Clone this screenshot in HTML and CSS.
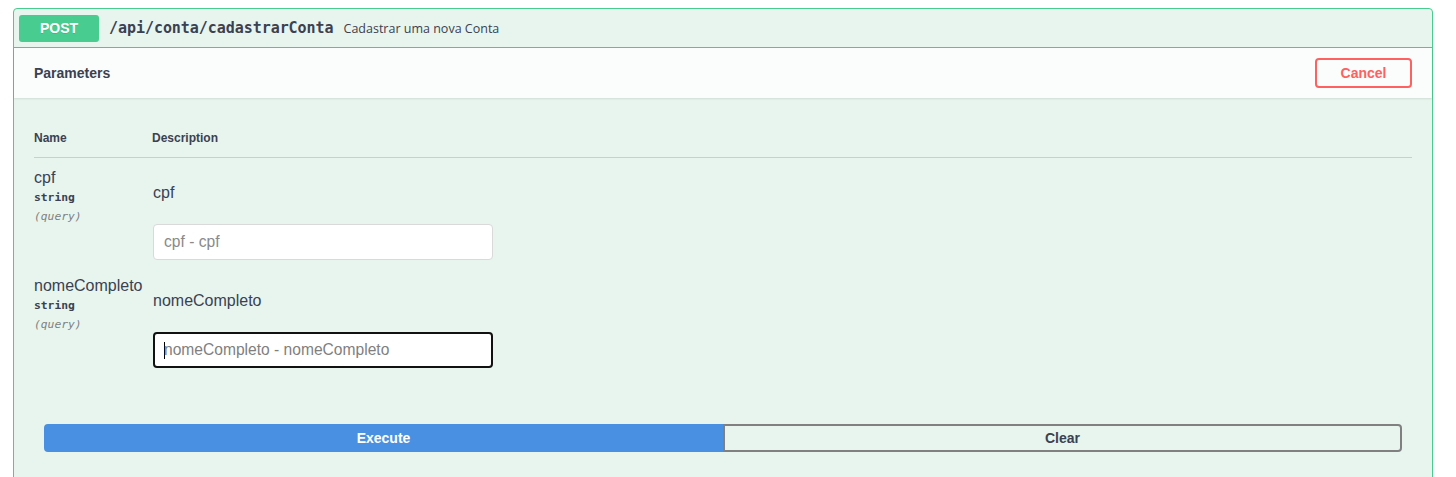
FILE: index.html
```html
<!DOCTYPE html>
<html lang="pt">
<head>
<meta charset="utf-8">
<title>Swagger</title>
<link rel="stylesheet" href="styles.css">
</head>
<body>
<div class="opblock">
  <div class="summary">
    <span class="method">POST</span>
    <span class="path">/api/conta/cadastrarConta</span>
    <span class="summary-desc">Cadastrar uma nova Conta</span>
  </div>
  <div class="section-header">
    <h4 class="section-title">Parameters</h4>
    <button class="btn-cancel">Cancel</button>
  </div>
  <div class="params-wrapper">
    <div class="params-head">
      <div class="col-name">Name</div>
      <div class="col-desc">Description</div>
    </div>
    <div class="param-row">
      <div class="col-name">
        <div class="param-name">cpf</div>
        <div class="param-type">string</div>
        <div class="param-in">(query)</div>
      </div>
      <div class="col-desc row-desc">
        <div class="param-desc">cpf</div>
        <input class="param-input" type="text" placeholder="cpf - cpf">
      </div>
    </div>
    <div class="param-row">
      <div class="col-name">
        <div class="param-name">nomeCompleto</div>
        <div class="param-type">string</div>
        <div class="param-in">(query)</div>
      </div>
      <div class="col-desc row-desc">
        <div class="param-desc">nomeCompleto</div>
        <div class="param-input focused"><span class="caret"></span><span class="ph">nomeCompleto - nomeCompleto</span></div>
      </div>
    </div>
  </div>
  <div class="btn-group">
    <button class="btn-execute">Execute</button>
    <button class="btn-clear">Clear</button>
  </div>
</div>
</body>
</html>
```

FILE: styles.css
```css
html, body {
  margin: 0;
  padding: 0;
  background: #ffffff;
}

body {
  padding-top: 8px;
  padding-left: 13px;
  font-family: "Liberation Sans", Arial, sans-serif;
  color: #3b4151;
}

.opblock {
  width: 1420px;
  box-sizing: border-box;
  border: 1px solid #49cc90;
  border-radius: 4px;
  background: #e7f5ee;
  height: 480px;
}

.summary {
  display: flex;
  align-items: center;
  padding: 5px;
  height: 39px;
  box-sizing: border-box;
  border-bottom: 1px solid #49cc90;
}

.method {
  display: inline-block;
  width: 80px;
  height: 27px;
  line-height: 27px;
  text-align: center;
  background: #49cc90;
  color: #fff;
  font-family: "Liberation Sans", Arial, sans-serif;
  font-weight: 700;
  font-size: 14px;
  border-radius: 3px;
  text-shadow: 0 1px 0 rgba(0,0,0,.1);
}

.path {
  padding: 0 10px;
  font-family: "DejaVu Sans Mono", monospace;
  font-weight: 700;
  font-size: 15px;
  color: #3b4151;
  letter-spacing: -0.05px;
}

.summary-desc {
  font-family: "Open Sans", sans-serif;
  font-size: 12.5px;
  color: #3b4151;
}

.section-header {
  display: flex;
  align-items: center;
  justify-content: space-between;
  height: 50px;
  box-sizing: border-box;
  padding: 0 20px;
  background: rgba(255,255,255,.8);
  box-shadow: 0 1px 2px rgba(0,0,0,.1);
}

.section-title {
  margin: 0;
  font-size: 14px;
  font-weight: 700;
  color: #3b4151;
}

.btn-cancel {
  width: 97px;
  height: 30px;
  box-sizing: border-box;
  background: transparent;
  border: 2px solid #ff6060;
  border-radius: 4px;
  color: #ff6060;
  font-family: "Liberation Sans", Arial, sans-serif;
  font-weight: 700;
  font-size: 14px;
  padding: 0;
  margin-top: 0;
}

.params-wrapper {
  padding: 20px 20px 20px 20px;
}

.params-head {
  display: flex;
  padding: 13px 0 11px;
  border-bottom: 1px solid rgba(59,65,81,.2);
  font-size: 12px;
  font-weight: 700;
  line-height: 15px;
}

.col-name {
  width: 118px;
  flex: none;
}

.col-desc {
  flex: 1;
}

.row-desc {
  padding-left: 1px;
}

.param-row {
  display: flex;
  padding: 10px 0 6px;
}

.param-row + .param-row {
  padding-bottom: 0;
}

.param-name {
  font-family: "Liberation Sans", Arial, sans-serif;
  font-size: 16px;
  line-height: 20px;
  color: #3b4151;
  white-space: nowrap;
}

.param-type {
  font-family: "DejaVu Sans Mono", monospace;
  font-weight: 700;
  font-size: 11.3px;
  line-height: 20px;
  color: #3b4151;
}

.param-in {
  font-family: "DejaVu Sans Mono", monospace;
  font-style: italic;
  font-size: 11.3px;
  line-height: 18px;
  color: #808080;
}

.param-desc {
  margin-top: 15px;
  font-family: "Liberation Sans", Arial, sans-serif;
  font-size: 16px;
  line-height: 20px;
  color: #3b4151;
}

.param-input {
  display: flex;
  align-items: center;
  margin-top: 21px;
  width: 340px;
  height: 36px;
  box-sizing: border-box;
  padding: 0 10px;
  background: #fff;
  border: 1px solid #d9d9d9;
  border-radius: 4px;
  font-family: "Liberation Sans", Arial, sans-serif;
  font-size: 15.6px;
  color: #3b4151;
  outline: none;
}

.param-input::placeholder {
  color: #8a8a8a;
}

.param-input.focused {
  border: 2px solid #111;
  padding: 0 9px;
}

.ph {
  color: #7f7f7f;
}

.caret {
  display: inline-block;
  width: 1px;
  height: 17px;
  background: #000;
  margin-right: -1px;
}

.btn-group {
  display: flex;
  padding: 36px 30px 20px;
}

.btn-execute, .btn-clear {
  flex: 1;
  height: 28px;
  box-sizing: border-box;
  font-family: "Liberation Sans", Arial, sans-serif;
  font-weight: 700;
  font-size: 14px;
  padding: 0;
}

.btn-execute {
  background: #4990e2;
  color: #fff;
  border: 2px solid #4990e2;
  border-radius: 4px 0 0 4px;
}

.btn-clear {
  background: transparent;
  color: #3b4151;
  border: 2px solid #808080;
  border-radius: 0 4px 4px 0;
}
```
